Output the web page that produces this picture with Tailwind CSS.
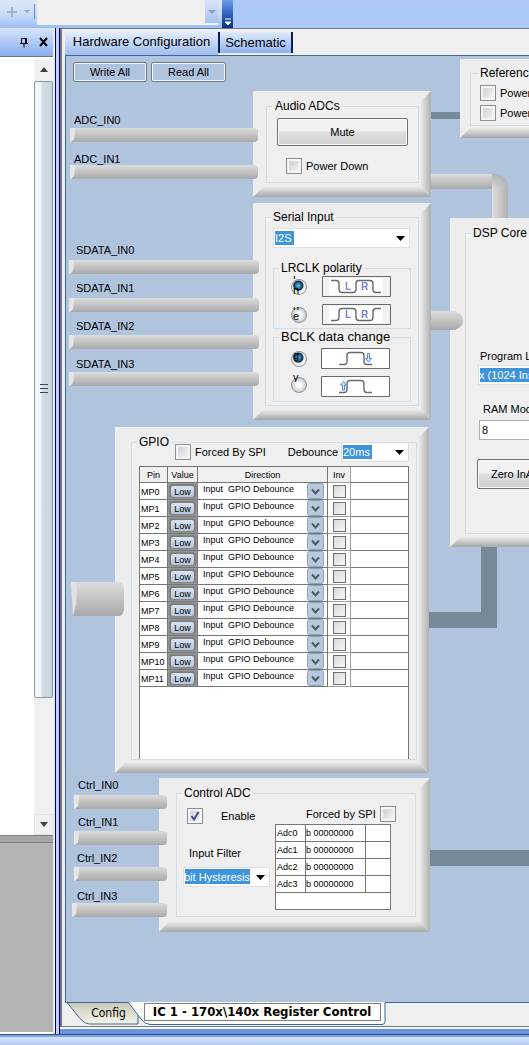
<!DOCTYPE html>
<html lang="en">
<head>
<meta charset="utf-8">
<title>Register Control</title>
<script src="https://cdn.jsdelivr.net/npm/@tailwindcss/browser@4"></script>
</head>
<body class="h-screen flex flex-col overflow-hidden bg-[#efefef] font-['Liberation_Sans',sans-serif] text-[11px] leading-[14px] text-black">

<!-- Toolbar -->
<header class="flex h-7 shrink-0 bg-[#abc8f7]">
  <div class="flex w-[222px] items-start bg-linear-to-b from-[#dce8fa] via-[#c9dcf7] to-[#9dbdf2]">
    <button type="button" aria-label="Add" class="ml-1.5 mt-1.5 h-3 w-3"><svg class="h-3 w-3" viewBox="0 0 12 12"><path d="M6 1v10M1 6h10" stroke="#9aa3b2" stroke-width="1.5"/></svg></button>
    <button type="button" aria-label="Add options" class="ml-1.5 mt-2.5 h-1 w-1.5"><svg class="h-1 w-1.5" viewBox="0 0 6 4"><path d="M0 0h6L3 3z" fill="#9aa3b2"/></svg></button>
    <span class="ml-1 mt-1 mr-0.5 h-[15px] w-px shrink-0 bg-[#6a8ccb]"></span>
    <div class="flex h-[25px] flex-1 bg-[#efefef]">
      <button type="button" aria-label="Open list" class="ml-auto grid h-[23px] w-[13px] place-items-center bg-linear-to-b from-[#dbe7fa] to-[#a3c1f3]"><svg class="h-1 w-2" viewBox="0 0 8 4"><path d="M0 0h8L4 4z" fill="#9a9a9a"/></svg></button>
    </div>
    <span class="w-[4px]"></span>
  </div>
  <button type="button" aria-label="Toolbar options" class="flex h-7 w-[11px] items-end justify-center bg-linear-to-b from-[#6d9ce8] via-[#2f62bd] to-[#0a2f80] pb-0.5"><svg class="h-2 w-2" viewBox="0 0 8 8"><path d="M1 1h6M1 4h6L4 7z" stroke="#fff" fill="#fff"/></svg></button>
</header>

<div class="flex min-h-0 flex-1">

  <!-- Docked side pane -->
  <aside class="flex w-[55px] shrink-0 flex-col border-r-2 border-[#e4ecfb]">
    <div class="flex h-[29px] shrink-0 items-center justify-end gap-2 border-b border-[#6e7686] bg-linear-to-b from-[#d7e5fb] to-[#87aeee] pr-[3px]">
      <button type="button" aria-label="Pin pane" class="h-3 w-3"><svg class="h-3 w-3" viewBox="0 0 12 12"><path d="M3.5 7V2.5h5V7M2 7.5h8M6 8v3.5" fill="none" stroke="#000"/><path d="M7 2h2v5H7z"/></svg></button>
      <button type="button" aria-label="Close pane" class="h-3 w-3"><svg class="h-3 w-3" viewBox="0 0 12 12"><path d="M2 2l7 8M9 2l-7 8" stroke="#000" stroke-width="2"/></svg></button>
    </div>
    <div class="flex min-h-0 flex-[778] bg-white pt-0.5">
      <div class="ml-auto flex w-[19px] flex-col bg-[#f0f0f0]">
        <button type="button" aria-label="Scroll up" class="grid h-[22px] shrink-0 place-items-center"><svg class="h-1.5 w-2.5" viewBox="0 0 10 6"><path d="M1 5h8L5 0z" fill="#3f3f3f"/></svg></button>
        <div class="grid flex-[616] place-items-center rounded-xs border border-[#8b99a3] bg-linear-to-r from-[#f4f8fa] from-30% via-[#d2dce3] via-45% to-[#c6d3db]"><svg class="h-3 w-2.5" viewBox="0 0 10 12"><path d="M1 1.5h8M1 5.5h8M1 9.5h8" stroke="#33475a"/></svg></div>
        <div class="flex-[117]"></div>
        <button type="button" aria-label="Scroll down" class="grid h-[21px] shrink-0 place-items-center border border-[#e2e2e2]"><svg class="h-1.5 w-2.5" viewBox="0 0 10 6"><path d="M1 0h8L5 5z" fill="#3f3f3f"/></svg></button>
      </div>
    </div>
    <div class="flex-[196] border-t border-b-2 border-t-[#808080] border-b-[#fff] bg-[#b3b3b3]"><div class="h-[7px] border-b border-[#808080] bg-[#a6a6a6]"></div></div>
  </aside>
  <div class="w-[5px] shrink-0 border-x-1 border-[#000066] bg-[#c3d0fb]"></div>

  <!-- Document area -->
  <main class="flex min-w-0 flex-1 flex-col border-b-[5px] border-[#6a93dc]">
   <div class="flex min-h-0 flex-1 flex-col border-t border-b border-l-2 border-[#77777f] pl-[3px]">
    <div role="tablist" class="flex h-[27px] shrink-0 items-end border-b border-[#3d6798] text-[13px]">
      <button type="button" role="tab" aria-selected="true" class="h-[26px] w-[153px] bg-linear-to-b from-[#edf3fd] to-[#9dbdec] pb-px text-center">Hardware Configuration</button>
      <button type="button" role="tab" aria-selected="false" class="mb-0.5 h-[21px] w-[75px] border-x-2 border-[#0d1f4d] bg-linear-to-b from-[#dfeafb] to-[#8fb3ee] text-center">Schematic</button>
    </div>

    <!-- Block diagram: free canvas -->
    <section class="relative min-h-0 flex-1 overflow-hidden border-l border-[#3d6798] bg-[#b0c4de]">

      <div class="absolute left-[7px] top-[6px] flex gap-1">
        <button type="button" class="h-5 w-[74px] rounded-xs border border-[#707a86] bg-[#b0c4de] shadow-[inset_0_0_0_1px_#f3f7fb]">Write All</button>
        <button type="button" class="h-5 w-[75px] rounded-xs border border-[#707a86] bg-[#b0c4de] shadow-[inset_0_0_0_1px_#f3f7fb]">Read All</button>
      </div>

      <!-- Control connections -->
      <svg class="absolute left-0 top-0 h-[946px] w-[700px]" viewBox="0 0 700 946">
        <defs>
          <linearGradient id="down" x1="0" y1="0" x2="0" y2="1"><stop offset="0" stop-color="#dcdcdc"/><stop offset="1" stop-color="#a9a9a9"/></linearGradient>
          <linearGradient id="across" x1="0" y1="0" x2="1" y2="0"><stop offset="0" stop-color="#dedede"/><stop offset="1" stop-color="#b0b0b0"/></linearGradient>
          <radialGradient id="elbow" gradientUnits="userSpaceOnUse" cx="426" cy="134" r="17"><stop offset="0" stop-color="#dcdcdc"/><stop offset="1" stop-color="#b2b2b2"/></radialGradient>
        </defs>
        <path d="M360 56h40v7h-40zM360 556h55v-70h16v86h-71zM360 794h340v16H360z" fill="#778899"/>
        <path d="M360 118h66v15h-66z" fill="url(#down)"/>
        <path d="M426 132h16v40h-16z" fill="url(#across)"/>
        <path d="M426 118h4q12 2 12 15h-16z" fill="url(#elbow)"/>
      </svg>

      <!-- Reference -->
      <div class="absolute left-[394px] top-[3px] w-[220px] bg-[#ededed] pt-[6px] pr-[14px] pb-[12px] pl-[10px] before:absolute before:inset-x-0 before:bottom-0 before:h-[11px] before:bg-linear-to-b before:from-[#efefef] before:to-[#a8a8a8] before:[clip-path:polygon(0_100%,11px_0,calc(100%_-_11px)_0,100%_100%)]">
        <fieldset class="border border-[#d3dde5] bg-[#efefef] pb-1 pl-[9px]">
          <legend class="ml-[-2px] px-0.5 text-[12px] leading-4">Reference</legend>
          <label class="mt-1 flex h-4 items-center gap-1"><input type="checkbox" class="h-4 w-4 appearance-none border border-[#8a9096] bg-linear-to-br from-[#c9ced3] to-[#f8f8f8] shadow-[inset_0_0_0_2px_#f4f4f4]">Power</label>
          <label class="mt-1 flex h-4 items-center gap-1"><input type="checkbox" class="h-4 w-4 appearance-none border border-[#8a9096] bg-linear-to-br from-[#c9ced3] to-[#f8f8f8] shadow-[inset_0_0_0_2px_#f4f4f4]">Power</label>
        </fieldset>
      </div>

      <!-- Audio ADCs -->
      <div class="absolute left-[187px] top-[35px] w-[178px] bg-[#ededed] pt-[7px] pr-[14px] pb-[14px] pl-[13px] before:absolute before:inset-x-0 before:bottom-0 before:h-[11px] before:bg-linear-to-b before:from-[#efefef] before:to-[#a8a8a8] before:[clip-path:polygon(0_100%,11px_0,calc(100%_-_11px)_0,100%_100%)] after:absolute after:inset-y-0 after:right-0 after:w-[11px] after:bg-linear-to-r after:from-[#efefef] after:to-[#b0b0b0] after:[clip-path:polygon(0_11px,100%_0,100%_100%,0_calc(100%_-_11px))]">
        <fieldset class="border border-[#d3dde5] bg-[#efefef] px-[10px] pb-2">
          <legend class="ml-[-4px] px-0.5 text-[12px] leading-4">Audio ADCs</legend>
          <button type="button" class="mt-1 mb-3 block h-7 w-[131px] rounded-xs border border-[#707070] bg-linear-to-b from-[#f2f2f2] from-45% via-[#dedede] via-50% to-[#d0d0d0] text-[11px] shadow-[inset_0_0_0_1px_#fafafa]">Mute</button>
          <label class="ml-[9px] flex h-4 items-center gap-1"><input type="checkbox" class="h-4 w-4 appearance-none border border-[#8a9096] bg-linear-to-br from-[#c9ced3] to-[#f8f8f8] shadow-[inset_0_0_0_2px_#f4f4f4]">Power Down</label>
        </fieldset>
      </div>

      <!-- Serial Input -->
      <div class="absolute left-[187px] top-[147px] w-[178px] bg-[#ededed] pt-[6px] pr-[12px] pb-[14px] pl-[12px] before:absolute before:inset-x-0 before:bottom-0 before:h-[11px] before:bg-linear-to-b before:from-[#efefef] before:to-[#a8a8a8] before:[clip-path:polygon(0_100%,11px_0,calc(100%_-_11px)_0,100%_100%)] after:absolute after:inset-y-0 after:right-0 after:w-[11px] after:bg-linear-to-r after:from-[#efefef] after:to-[#b0b0b0] after:[clip-path:polygon(0_11px,100%_0,100%_100%,0_calc(100%_-_11px))]">
        <fieldset class="border border-[#d3dde5] bg-[#efefef] px-[7px] pb-[3px]">
          <legend class="ml-[-2px] px-0.5 text-[12px] leading-4">Serial Input</legend>
          <div class="relative mt-[3px]">
            <select aria-label="Serial format" class="block h-5 w-[137px] appearance-none border border-[#dcdfe3] bg-white bg-[linear-gradient(#3c94dc,#3c94dc)] bg-[length:19px_14px] bg-[position:1px_2px] bg-no-repeat pl-[1px] text-[11px] text-white"><option>I2S</option></select>
            <svg class="pointer-events-none absolute right-[6px] top-[8px] h-[5px] w-[9px]" viewBox="0 0 9 5"><path d="M0 0h9L4.500 5z"/></svg>
          </div>
          <fieldset class="mt-3 border border-[#d3dde5] pb-[3px] pl-[17px]">
            <legend class="ml-[-12px] px-0.5 text-[12px] leading-4">LRCLK polarity</legend>
            <label class="relative flex h-[21px] items-center gap-[15px]">
              <input type="radio" name="lrclk" checked class="h-4 w-4 appearance-none rounded-full border border-[#8a9096] bg-[radial-gradient(circle_at_45%_40%,#7cc4e4_0,#1c6a94_25%,#0b2c48_40%,#f2f2f2_50%)]">
              <svg class="h-[21px] w-[69px]" viewBox="0 0 69 21"><path d="M.5.5h68v20H.5z" fill="#f1f1f1" stroke="#6a6a6a"/><path d="M7 2h54v17H7z" fill="#fff"/><path d="M9 4.500h5q3 0 3 3v6q0 3 3 3h11q3 0 3-3v-6q0-3 3-3h11q3 0 3 3v6q0 3 3 3h5" fill="none" stroke="#6a6a6a" stroke-width="1.400"/><text x="23" y="14" font-size="10" font-weight="700" fill="#8080d0">L</text><text x="39" y="14" font-size="10" font-weight="700" fill="#8080d0">R</text></svg>
              <span class="absolute left-[2px] top-0 h-[3px] w-3 overflow-hidden leading-[0px]">t</span>
              <span class="absolute left-[2px] top-[7px]">n</span>
            </label>
            <label class="relative mt-[7px] flex h-[21px] items-center gap-[15px]">
              <input type="radio" name="lrclk" class="h-4 w-4 appearance-none rounded-full border border-[#8a9096] bg-[radial-gradient(circle,#fdfdfd_20%,#c9ced3_70%)]">
              <svg class="h-[21px] w-[69px]" viewBox="0 0 69 21"><path d="M.5.5h68v20H.5z" fill="#f1f1f1" stroke="#6a6a6a"/><path d="M7 2h54v17H7z" fill="#fff"/><path d="M9 16.500h5q3 0 3-3v-6q0-3 3-3h11q3 0 3 3v6q0 3 3 3h11q3 0 3-3v-6q0-3 3-3h5" fill="none" stroke="#6a6a6a" stroke-width="1.400"/><text x="23" y="14" font-size="10" font-weight="700" fill="#8080d0">L</text><text x="39" y="14" font-size="10" font-weight="700" fill="#8080d0">R</text></svg>
              <span class="absolute left-[2px] top-[2px] h-[4px] w-3 overflow-hidden leading-[6px]">u</span>
              <span class="absolute left-[2px] top-[5px]">e</span>
            </label>
          </fieldset>
          <fieldset class="border border-[#d3dde5] pb-[4px] pl-[17px]">
            <legend class="ml-[-12px] px-0.5 text-[13px] leading-4">BCLK data change</legend>
            <label class="relative mt-[3px] flex h-[21px] items-center gap-[14px]">
              <input type="radio" name="bclk" checked class="h-4 w-4 appearance-none rounded-full border border-[#8a9096] bg-[radial-gradient(circle_at_45%_40%,#7cc4e4_0,#1c6a94_25%,#0b2c48_40%,#f2f2f2_50%)]">
              <svg class="h-[21px] w-[69px]" viewBox="0 0 69 21"><path d="M.5.5h68v20H.5z" fill="#fff" stroke="#6a6a6a"/><path d="M18 16.500h5q3 0 3-3v-6q0-3 3-3h11q3 0 3 3v6q0 3 3 3h5" fill="none" stroke="#6a6a6a" stroke-width="1.400"/><path d="M46.500 5.500h2v5h2l-3 3.500-3-3.500h2z" fill="#d9ebfb" stroke="#3f7fd0" stroke-width=".9"/></svg>
              <span class="absolute left-[2px] top-0">g</span>
            </label>
            <label class="relative mt-[7px] flex h-[21px] items-center gap-[14px]">
              <input type="radio" name="bclk" class="mb-1 h-4 w-4 appearance-none rounded-full border border-[#8a9096] bg-[radial-gradient(circle,#fdfdfd_20%,#c9ced3_70%)]">
              <svg class="h-[21px] w-[69px]" viewBox="0 0 69 21"><path d="M.5.5h68v20H.5z" fill="#fff" stroke="#6a6a6a"/><path d="M18 16.500h5q3 0 3-3v-6q0-3 3-3h11q3 0 3 3v6q0 3 3 3h5" fill="none" stroke="#6a6a6a" stroke-width="1.400"/><path d="M21.500 14v-5h-2l3-3.500 3 3.500h-2v5z" fill="#d9ebfb" stroke="#3f7fd0" stroke-width=".9"/></svg>
              <span class="absolute left-[2px] top-[-3px] h-[9px] w-3 overflow-hidden leading-[8px]">y</span>
            </label>
          </fieldset>
        </fieldset>
      </div>

      <!-- DSP Core -->
      <div class="absolute left-[384px] top-[162px] w-[240px] bg-[#ededed] pt-[7px] pr-[14px] pb-[13px] pl-[15px] before:absolute before:inset-x-0 before:bottom-0 before:h-[11px] before:bg-linear-to-b before:from-[#efefef] before:to-[#a8a8a8] before:[clip-path:polygon(0_100%,11px_0,calc(100%_-_11px)_0,100%_100%)]">
        <fieldset class="border border-[#d3dde5] bg-[#efefef] pb-[44px] pl-[12px]">
          <legend class="ml-[-7px] px-0.5 text-[12px] leading-4">DSP Core</legend>
          <label for="plen" class="mt-[108px] ml-[2px] block">Program Length</label>
          <select id="plen" class="mt-[2px] block h-5 w-[180px] appearance-none border border-[#dcdfe3] bg-white bg-[linear-gradient(#3c94dc,#3c94dc)] bg-[length:140px_14px] bg-[position:1px_2px] bg-no-repeat text-[11px] text-white"><option>x (1024 Instructions)</option></select>
          <label for="ram" class="mt-[17px] ml-[5px] block">RAM Modulo</label>
          <input id="ram" type="text" value="8" class="mt-[4px] ml-px block h-5 w-[180px] border border-[#abadb3] bg-white px-0.5 text-[11px]">
          <button type="button" class="mt-[19px] -ml-px block h-[30px] w-[180px] rounded-xs border border-[#707070] bg-linear-to-b from-[#f2f2f2] from-45% via-[#dedede] via-50% to-[#d0d0d0] pl-[13px] text-left text-[11px] shadow-[inset_0_0_0_1px_#fafafa]">Zero InAll</button>
        </fieldset>
      </div>

      <!-- GPIO -->
      <div class="absolute left-[49px] top-[371px] w-[314px] bg-[#ededed] pt-[7px] pr-[12px] pb-[13px] pl-[16px] before:absolute before:inset-x-0 before:bottom-0 before:h-[11px] before:bg-linear-to-b before:from-[#efefef] before:to-[#a8a8a8] before:[clip-path:polygon(0_100%,11px_0,calc(100%_-_11px)_0,100%_100%)] after:absolute after:inset-y-0 after:right-0 after:w-[11px] after:bg-linear-to-r after:from-[#efefef] after:to-[#b0b0b0] after:[clip-path:polygon(0_11px,100%_0,100%_100%,0_calc(100%_-_11px))]">
        <fieldset class="border border-[#d3dde5] bg-[#efefef] px-[7px]">
          <legend class="ml-[-2px] px-0.5 text-[12px] leading-4">GPIO</legend>
          <div class="-mt-[8px] flex h-5 items-center pl-[36px]">
            <label class="flex items-center gap-1"><input type="checkbox" class="h-4 w-4 appearance-none border border-[#8a9096] bg-linear-to-br from-[#c9ced3] to-[#f8f8f8] shadow-[inset_0_0_0_2px_#f4f4f4]">Forced By SPI</label>
            <label for="deb" class="ml-auto">Debounce</label>
            <div class="relative ml-[3px]">
              <select id="deb" class="block h-5 w-[68px] appearance-none border border-[#dcdfe3] bg-white bg-[linear-gradient(#3c94dc,#3c94dc)] bg-[length:29px_14px] bg-[position:1px_2px] bg-no-repeat pl-[1px] text-[11px] text-white"><option>20ms</option></select>
              <svg class="pointer-events-none absolute right-[5px] top-[8px] h-[5px] w-[9px]" viewBox="0 0 9 5"><path d="M0 0h9L4.500 5z"/></svg>
            </div>
          </div>
          <div class="mt-1 h-[293px] w-[270px] border border-b-0 border-[#767676] bg-white text-[9px] leading-[12px]">
            <table class="w-full table-fixed border-separate border-spacing-0">
              <colgroup><col class="w-[28px]"><col class="w-[30px]"><col class="w-[130px]"><col class="w-[23px]"><col></colgroup>
              <thead><tr class="h-4 bg-[#efefef]">
                <th class="border-r border-b border-[#767676] font-normal">Pin</th>
                <th class="border-r border-b border-[#767676] font-normal">Value</th>
                <th class="border-r border-b border-[#767676] font-normal">Direction</th>
                <th class="border-r border-b border-[#a0a0a0] font-normal">Inv</th>
                <th class="border-b border-[#767676] bg-white"></th>
              </tr></thead>
              <tbody id="pins"></tbody>
            </table>
          </div>
        </fieldset>
      </div>

      <!-- Control ADC -->
      <div class="absolute left-[93px] top-[722px] w-[271px] bg-[#ededed] pt-[7px] pr-[14px] pb-[15px] pl-[17px] before:absolute before:inset-x-0 before:bottom-0 before:h-[11px] before:bg-linear-to-b before:from-[#efefef] before:to-[#a8a8a8] before:[clip-path:polygon(0_100%,11px_0,calc(100%_-_11px)_0,100%_100%)] after:absolute after:inset-y-0 after:right-0 after:w-[11px] after:bg-linear-to-r after:from-[#efefef] after:to-[#b0b0b0] after:[clip-path:polygon(0_11px,100%_0,100%_100%,0_calc(100%_-_11px))]">
        <fieldset class="border border-[#d3dde5] bg-[#efefef] pb-[6px] pl-[6px]">
          <legend class="ml-[-1px] px-0.5 text-[12px] leading-4">Control ADC</legend>
          <div class="flex gap-[5px] pt-[5px]">
            <div class="w-[87px] shrink-0 pt-[2px]">
              <label class="relative ml-[4px] flex h-4 items-center gap-[18px]"><input type="checkbox" checked class="h-4 w-4 appearance-none border border-[#8a9096] bg-linear-to-br from-[#c9ced3] to-[#f8f8f8] shadow-[inset_0_0_0_2px_#f4f4f4]"><svg class="absolute left-[3px] top-[3px] h-[10px] w-[10px]" viewBox="0 0 10 10"><path d="M1.500 5l2.500 3.500L8.500 1" fill="none" stroke="#3a4f8c" stroke-width="2"/></svg>Enable</label>
              <label for="filt" class="mt-[22px] ml-[6px] block text-[11px]">Input Filter</label>
              <div class="relative mt-[7px]">
                <select id="filt" class="block h-5 w-[87px] appearance-none border border-[#dcdfe3] bg-white bg-[linear-gradient(#3c94dc,#3c94dc)] bg-[length:65px_15px] bg-[position:1px_1px] bg-no-repeat text-[11px] text-white"><option>bit Hysteresis</option></select>
                <svg class="pointer-events-none absolute right-[5px] top-[8px] h-[5px] w-[9px]" viewBox="0 0 9 5"><path d="M0 0h9L4.500 5z"/></svg>
              </div>
            </div>
            <div>
              <label class="mb-[2px] ml-[31px] flex h-4 items-center gap-1">Forced by SPI<input type="checkbox" class="h-4 w-4 appearance-none border border-[#8a9096] bg-linear-to-br from-[#c9ced3] to-[#f8f8f8] shadow-[inset_0_0_0_2px_#f4f4f4]"></label>
              <div class="h-[86px] w-[116px] border border-[#767676] bg-white text-[9px] leading-[12px]">
                <table class="w-full table-fixed border-separate border-spacing-0">
                  <colgroup><col class="w-[30px]"><col class="w-[60px]"><col></colgroup>
                  <tbody>
                    <tr class="h-[17px]"><td class="border-r border-b border-[#767676] pl-px">Adc0</td><td class="border-r border-b border-[#767676]">b 00000000</td><td class="border-b border-[#767676]"></td></tr>
                    <tr class="h-[17px]"><td class="border-r border-b border-[#767676] pl-px">Adc1</td><td class="border-r border-b border-[#767676]">b 00000000</td><td class="border-b border-[#767676]"></td></tr>
                    <tr class="h-[17px]"><td class="border-r border-b border-[#767676] pl-px">Adc2</td><td class="border-r border-b border-[#767676]">b 00000000</td><td class="border-b border-[#767676]"></td></tr>
                    <tr class="h-[17px]"><td class="border-r border-b border-[#767676] pl-px">Adc3</td><td class="border-r border-b border-[#767676]">b 00000000</td><td class="border-b border-[#767676]"></td></tr>
                  </tbody>
                </table>
              </div>
            </div>
          </div>
        </fieldset>
      </div>

      <!-- Input pins plugged into the blocks -->
      <svg class="pointer-events-none absolute left-0 top-0 h-[946px] w-[700px]" viewBox="0 0 700 946">
        <defs>
          <g id="adc"><path d="M4 0h184q4 0 4 4v6q0 4-4 4H5z" fill="url(#down)"/><path d="M4 0h5v4l-1 7-3 3H4z" fill="#e6e6e6"/></g>
          <g id="sd"><path d="M3 0h186q4 0 4 4v6q0 4-4 4H4z" fill="url(#down)"/><path d="M3 0h5v4l-1 7-3 3H3z" fill="#e6e6e6"/></g>
          <g id="ctl"><path d="M8 0h89q4 0 4 4v6q0 4-4 4H8z" fill="url(#down)"/><path d="M8 0h5v4l-1 7-3 3H8z" fill="#e6e6e6"/></g>
        </defs>
        <use href="#adc" y="72"/><use href="#adc" y="109"/>
        <use href="#sd" y="204"/><use href="#sd" y="242"/><use href="#sd" y="279"/><use href="#sd" y="316"/>
        <use href="#ctl" y="739"/><use href="#ctl" y="775"/><use href="#ctl" y="811"/>
        <path d="M6 847h91q4 0 4 4v6q0 4-4 4H6z" fill="url(#down)"/><path d="M6 847h5v4l-1 7-3 3H6z" fill="#e6e6e6"/>
        <path d="M5 526h49q4 2 4 8v18q0 6-4 8H7z" fill="url(#down)"/><path d="M5 526h5l1 10-1 12-3 12z" fill="#e2e2e2"/>
        <path d="M365 255h24q8 3 8 9.500t-8 9.500h-24z" fill="url(#down)"/>
      </svg>
      <span class="absolute left-[8px] top-[57px]">ADC_IN0</span>
      <span class="absolute left-[8px] top-[96px]">ADC_IN1</span>
      <span class="absolute left-[10px] top-[187px]">SDATA_IN0</span>
      <span class="absolute left-[10px] top-[225px]">SDATA_IN1</span>
      <span class="absolute left-[10px] top-[263px]">SDATA_IN2</span>
      <span class="absolute left-[10px] top-[301px]">SDATA_IN3</span>
      <span class="absolute left-[12px] top-[722px]">Ctrl_IN0</span>
      <span class="absolute left-[12px] top-[759px]">Ctrl_IN1</span>
      <span class="absolute left-[11px] top-[795px]">Ctrl_IN2</span>
      <span class="absolute left-[11px] top-[833px]">Ctrl_IN3</span>
    </section>

    <!-- Sheet tabs -->
    <div role="tablist" class="relative flex h-6 shrink-0 border-t border-[#3d6798] font-['DejaVu_Sans_Condensed','DejaVu_Sans',sans-serif] text-[12px]">
      <svg class="absolute left-0 top-[-1px] h-6 w-[322px]" viewBox="0 0 322 24">
        <defs><linearGradient id="sheet" x1="0" y1="0" x2="0" y2="1"><stop offset="0" stop-color="#c9c9b4"/><stop offset="1" stop-color="#f4f4ec"/></linearGradient></defs>
        <path d="M2 .5l13 16q5 5.500 9 5.500h49V.5z" fill="url(#sheet)" stroke="#3d6798"/>
        <path d="M63 0l13 17q4 5.500 9 5.500h232q3 0 3-3V0z" fill="#fcfcf8" stroke="#3d6798"/>
        <path d="M64 0h256v1H64z" fill="#fcfcf8"/>
        <path d="M79.500 1.500h236v17h-236z" fill="none" stroke="#000" stroke-dasharray="1 1"/>
      </svg>
      <button type="button" role="tab" aria-selected="false" class="relative h-5 w-[79px] pl-[8px] text-center">Config</button>
      <button type="button" role="tab" aria-selected="true" class="relative h-5 w-[236px] pb-0.5 text-center text-[13px] font-bold">IC 1 - 170x\140x Register Control</button>
    </div>
   </div>
   <div class="h-[2px] shrink-0 bg-[#f4f6fa]"></div>
  </main>
</div>

<footer class="h-[11px] shrink-0 border-t border-[#2d4f93] bg-linear-to-b from-[#7fa3e2] from-15% via-[#d3e2fa] via-25% to-[#b4cdf5]"></footer>

<script>
  // One table row per multipurpose pin.
  document.getElementById('pins').innerHTML = Array.from({length: 12}, (_, i) => `
    <tr class="h-[17px]">
      <td class="border-r border-b border-[#767676] p-0 pt-0.5 pl-px">MP${i}</td>
      <td class="border-r border-b border-[#767676] p-0"><button type="button" class="block h-4 w-[29px] bg-[#727272] p-[3px] pb-[2px] shadow-[inset_0_0_3px_1px_#a8a8a8]"><span class="block h-[11px] rounded-xs bg-linear-to-b from-[#d9e4f1] to-[#b4c5da] leading-[13px]">Low</span></button></td>
      <td class="border-r border-b border-[#767676] p-0"><div class="relative"><select aria-label="MP${i} direction" class="block h-4 w-full appearance-none pb-1 pl-[5px] leading-[12px]"><option>Input&nbsp; GPIO Debounce</option></select><svg class="pointer-events-none absolute right-[3px] top-0 h-4 w-[17px]" viewBox="0 0 17 16"><rect x=".5" y=".5" width="16" height="15" rx="2" fill="#b7c9de" stroke="#8ea3bb"/><path d="M5 6.500l3.500 4 3.500-4" fill="none" stroke="#505a66" stroke-width="2"/></svg></div></td>
      <td class="border-r border-b border-[#a0a0a0] p-0"><input type="checkbox" aria-label="MP${i} invert" class="mx-auto block h-[13px] w-[13px] appearance-none border border-[#707070] bg-linear-to-br from-[#d8dadd] to-[#f6f6f6]"></td>
      <td class="border-b border-[#767676] p-0"></td>
    </tr>`).join('');
</script>
</body>
</html>
